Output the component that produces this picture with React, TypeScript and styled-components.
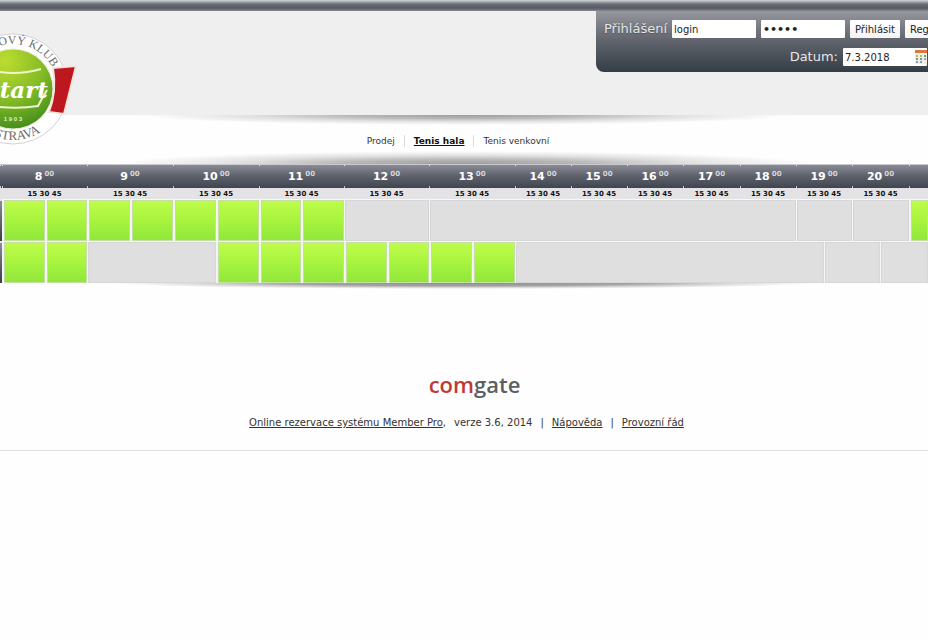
import React from "react";
import styled, { createGlobalStyle, css } from "styled-components";

const GlobalStyle = createGlobalStyle`
  * { box-sizing: border-box; }
  html { overflow-x: hidden; }
  body {
    margin: 0;
    background: #fefefe;
    color: #333;
    font-family: "DejaVu Sans", Verdana, sans-serif;
    font-size: 10px;
    overflow-x: hidden;
  }
`;

const TopBar = styled.div`
  height: 11px;
  background: linear-gradient(#d4d8da 0, #6b6e76 4px, #565962 8px, #85888f 11px);
`;

const Header = styled.header`
  position: relative;
  display: flex;
  justify-content: flex-end;
  align-items: flex-start;
  height: 104px;
  background: #efefef;
`;

const Logo = styled.svg`
  position: absolute;
  left: 0;
  top: 19px;
  z-index: 1;
`;

const Panel = styled.form`
  display: flex;
  flex-direction: column;
  gap: 10px;
  width: 332px;
  height: 61px;
  padding: 9px 0 0 8px;
  overflow: hidden;
  border-bottom-left-radius: 8px;
  background: linear-gradient(#96979f, #64676f 45%, #343d46);
  color: #e3e5ea;
`;

const PanelRow = styled.div<{ $end?: boolean }>`
  display: flex;
  align-items: center;
  gap: 5px;
  justify-content: ${(p) => (p.$end ? "flex-end" : "flex-start")};
  padding-right: ${(p) => (p.$end ? "1px" : "0")};
`;

const Caption = styled.label`
  flex: none;
  font-size: 13px;
  line-height: 18px;
  text-align: right;
  text-shadow: 0 1px 1px #555;
`;

const fieldBox = css`
  flex: none;
  height: 18px;
  border: 0;
  border-radius: 1px;
  background: #fff;
  color: #222;
  font: 10px "DejaVu Sans", Verdana, sans-serif;
`;

const Field = styled.input`
  ${fieldBox}
  width: 84px;
  padding: 1px 2px 0;
  &[type="password"] { font-size: 11px; font-weight: 700; }
`;

const DateBox = styled.div`
  ${fieldBox}
  display: flex;
  align-items: center;
  width: 84px;
`;

const DateField = styled.input`
  width: 72px;
  padding: 1px 2px 0;
  border: 0;
  background: transparent;
  color: #222;
  font: 10px "DejaVu Sans", Verdana, sans-serif;
`;

const Button = styled.button`
  ${fieldBox}
  padding: 1px 5px 0;
  white-space: nowrap;
  background: linear-gradient(#fff, #f4f4f4);
`;

const PickerButton = styled.button`
  display: flex;
  padding: 0;
  border: 0;
  background: none;
`;

const Nav = styled.nav`
  display: flex;
  justify-content: center;
  align-items: center;
  height: 49px;
  padding: 3px 12px 0 0;
  background:
    radial-gradient(ellipse 330px 10px at 50% 0, #9c9c9c, #b8b8b8 35%, rgba(205, 205, 205, 0.6) 65%, transparent) no-repeat,
    radial-gradient(ellipse 350px 13px at 50% 100%, #9c9c9c, #b8b8b8 35%, rgba(205, 205, 205, 0.6) 65%, transparent) no-repeat;
`;

const NavLink = styled.a<{ $active?: boolean }>`
  padding: 0 9px;
  font-size: 9px;
  line-height: 12px;
  color: ${(p) => (p.$active ? "#111" : "#333")};
  font-weight: ${(p) => (p.$active ? 700 : 400)};
  text-decoration: ${(p) => (p.$active ? "underline" : "none")};
  & + & { border-left: 1px solid #ddd; }
`;

const Schedule = styled.table`
  width: 100%;
  table-layout: fixed;
  border-collapse: separate;
  border-spacing: 0;
`;

const Col = styled.col<{ $w: number }>`
  width: ${(p) => p.$w}px;
`;

const HourCell = styled.th`
  height: 24px;
  padding: 1px 0 0;
  border-top: 1px solid #c9cacd;
  background:
    linear-gradient(#e4e4e6, #e4e4e6) 0 0 / 1px 1px no-repeat,
    linear-gradient(#c4c6ca, #c4c6ca) 0 100% / 1px 2px no-repeat,
    linear-gradient(#898c95, #5d606a 50%, #3f454f);
  color: #fff;
  font: 700 11px/22px "DejaVu Sans", Verdana, sans-serif;
  text-align: center;
  white-space: nowrap;
  overflow: hidden;
`;

const Zeros = styled.sup`
  margin-left: 2px;
  color: #d5d7dc;
  font-size: 7px;
  line-height: 0;
  vertical-align: 4px;
`;

const MinuteCell = styled.td`
  height: 11px;
  padding: 1px 0 0;
  background: #e3e3e5;
  color: #111;
  font: 700 7px/10px "DejaVu Sans", Verdana, sans-serif;
  text-align: center;
  white-space: nowrap;
`;

const CourtHead = styled.th`
  padding: 0;
  border-top: 2px solid #e6e6e6;
  background: linear-gradient(#8a8c95, #383d47);
`;

const Slot = styled.td<{ $free?: boolean }>`
  height: 42px;
  padding: 0;
  border-top: 1px solid #f8f8f8;
  border-left: ${(p) => (p.$free ? "2px" : "1px")} solid #f4f5f2;
  background: ${(p) => (p.$free ? "linear-gradient(#bffd49, #a8f440 50%, #8fe63b)" : "#dfdfdf")};
  box-shadow: inset 0 0 0 1px ${(p) => (p.$free ? "#c4dea4" : "#d6d6d6")};
`;

const TableShadow = styled.div`
  height: 7px;
  background: radial-gradient(ellipse 350px 6px at 50% 0, #8e8e8e, #a4a4a4 50%, rgba(190, 190, 190, 0.6) 75%, transparent) no-repeat;
`;

const Footer = styled.footer`
  display: flex;
  flex-direction: column;
  align-items: center;
  gap: 16px;
  padding: 78px 0 20px 5px;
  border-bottom: 1px solid #dedede;
`;

const Brand = styled.a`
  padding-left: 16px;
  color: #5c6063;
  font: 600 22px/32px "Open Sans", sans-serif;
  text-decoration: none;
`;

const BrandRed = styled.span`
  color: #bd3a36;
`;

const Legal = styled.div`
  display: flex;
  gap: 8px;
  font-size: 10px;
  line-height: 14px;
  white-space: nowrap;
`;

const TextLink = styled.a`
  color: #333;
`;

const HOURS = [8, 9, 10, 11, 12, 13, 14, 15, 16, 17, 18, 19, 20];

const HALF_HOURS = [
  43, 42, 43, 43, 43, 43, 42, 43, 43, 42, 43, 43,
  28, 28, 28, 28, 28, 28, 28, 29, 28, 28, 28, 28, 28, 29,
];

type Block = { span: number; free?: boolean };

const free = (count: number): Block[] => Array.from({ length: count }, () => ({ span: 1, free: true }));

const COURTS: Block[][] = [
  [...free(8), { span: 2 }, { span: 12 }, { span: 2 }, { span: 2 }, ...free(1)],
  [...free(2), { span: 3 }, ...free(7), { span: 11 }, { span: 2 }, { span: 2 }],
];

function ClubLogo() {
  return (
    <Logo width="84" height="118" viewBox="0 30 84 118" role="img" aria-label="Tenisový klub Start Ostrava">
      <defs>
        <radialGradient id="ball" cx="40%" cy="15%" r="90%">
          <stop offset="0" stopColor="#bcdc30" />
          <stop offset="0.55" stopColor="#84bb26" />
          <stop offset="1" stopColor="#3f8a1c" />
        </radialGradient>
        <path id="arcTop" d="M-32 89 A45 45 0 0 1 58 89" />
        <path id="arcBottom" d="M-38 89 A51 51 0 0 0 64 89" />
      </defs>
      <circle cx="13" cy="89" r="55" fill="#fff" stroke="#d2d2d2" />
      <circle cx="13" cy="89" r="40" fill="url(#ball)" stroke="#e7efd0" />
      <path d="M53 68 L76 66 L64 114 L49 112 Q57 91 53 68Z" fill="#bd1720" stroke="#f2e6dc" strokeWidth="2" />
      <path d="M0 72 Q20 75 41 69 M0 107 Q20 109 38 106 Q42 98 47 90" fill="none" stroke="#edf5c9" strokeWidth="2" />
      <g fill="#6c6c6c" fontFamily="Liberation Serif, serif">
        <text textAnchor="middle" fontSize="12"><textPath href="#arcTop" startOffset="50%">TENISOVÝ KLUB</textPath></text>
        <text textAnchor="middle" fontSize="13"><textPath href="#arcBottom" startOffset="50%">OSTRAVA</textPath></text>
      </g>
      <text x="48" y="98" textAnchor="end" fill="#fff" fontFamily="DejaVu Serif, serif" fontStyle="italic" fontWeight="700" fontSize="23">Start</text>
      <text x="13" y="121" textAnchor="middle" fill="#e5f2c0" fontFamily="Liberation Sans, sans-serif" fontWeight="700" fontSize="6">1 9 0 3</text>
    </Logo>
  );
}

function CalendarIcon() {
  return (
    <svg width="12" height="14" viewBox="0 0 12 14" aria-hidden="true">
      <rect width="12" height="14" fill="#efede4" />
      <rect width="12" height="3" fill="#d9793f" />
      <path d="M1 5h2v2H1zM5 5h2v2H5z" fill="#c6b65b" />
      <path d="M9 5h2v2H9zM1 8h2v2H1zM5 8h2v2H5z" fill="#6da36e" />
      <path d="M9 8h2v2H9zM1 11h2v2H1zM5 11h2v2H5z" fill="#7ca6c4" />
    </svg>
  );
}

export default function App() {
  return (
    <>
      <GlobalStyle />
      <TopBar />
      <Header>
        <ClubLogo />
        <Panel onSubmit={(e) => e.preventDefault()}>
          <PanelRow>
            <Caption htmlFor="login">Přihlášení</Caption>
            <Field id="login" defaultValue="login" />
            <Field type="password" aria-label="Heslo" defaultValue="heslo" />
            <Button type="submit">Přihlásit</Button>
            <Button type="button">Registrace</Button>
          </PanelRow>
          <PanelRow $end>
            <Caption htmlFor="date">Datum:</Caption>
            <DateBox>
              <DateField id="date" defaultValue="7.3.2018" />
              <PickerButton type="button" aria-label="Kalendář">
                <CalendarIcon />
              </PickerButton>
            </DateBox>
          </PanelRow>
        </Panel>
      </Header>
      <Nav>
        <NavLink href="#prodej">Prodej</NavLink>
        <NavLink href="#hala" $active>Tenis hala</NavLink>
        <NavLink href="#venkovni">Tenis venkovní</NavLink>
      </Nav>
      <Schedule>
        <colgroup>
          <Col $w={2} />
          {HALF_HOURS.map((w, i) => (
            <Col key={i} $w={w} />
          ))}
          <Col $w={19} />
        </colgroup>
        <thead>
          <tr>
            <HourCell />
            {HOURS.map((h) => (
              <HourCell key={h} colSpan={2} scope="col">
                {h}
                <Zeros>00</Zeros>
              </HourCell>
            ))}
            <HourCell />
          </tr>
          <tr>
            <MinuteCell />
            {HOURS.map((h) => (
              <MinuteCell key={h} colSpan={2}>15 30 45</MinuteCell>
            ))}
            <MinuteCell />
          </tr>
        </thead>
        <tbody>
          {COURTS.map((blocks, row) => (
            <tr key={row}>
              <CourtHead scope="row" />
              {blocks.map((b, i) => (
                <Slot key={i} colSpan={b.span} $free={b.free} />
              ))}
            </tr>
          ))}
        </tbody>
      </Schedule>
      <TableShadow />
      <Footer>
        <Brand href="#comgate">
          <BrandRed>com</BrandRed>gate
        </Brand>
        <Legal>
          <span>
            <TextLink href="#memberpro">Online rezervace systému Member Pro</TextLink>,
          </span>
          <span>verze 3.6, 2014</span>
          <span>|</span>
          <TextLink href="#napoveda">Nápověda</TextLink>
          <span>|</span>
          <TextLink href="#rad">Provozní řád</TextLink>
        </Legal>
      </Footer>
    </>
  );
}
